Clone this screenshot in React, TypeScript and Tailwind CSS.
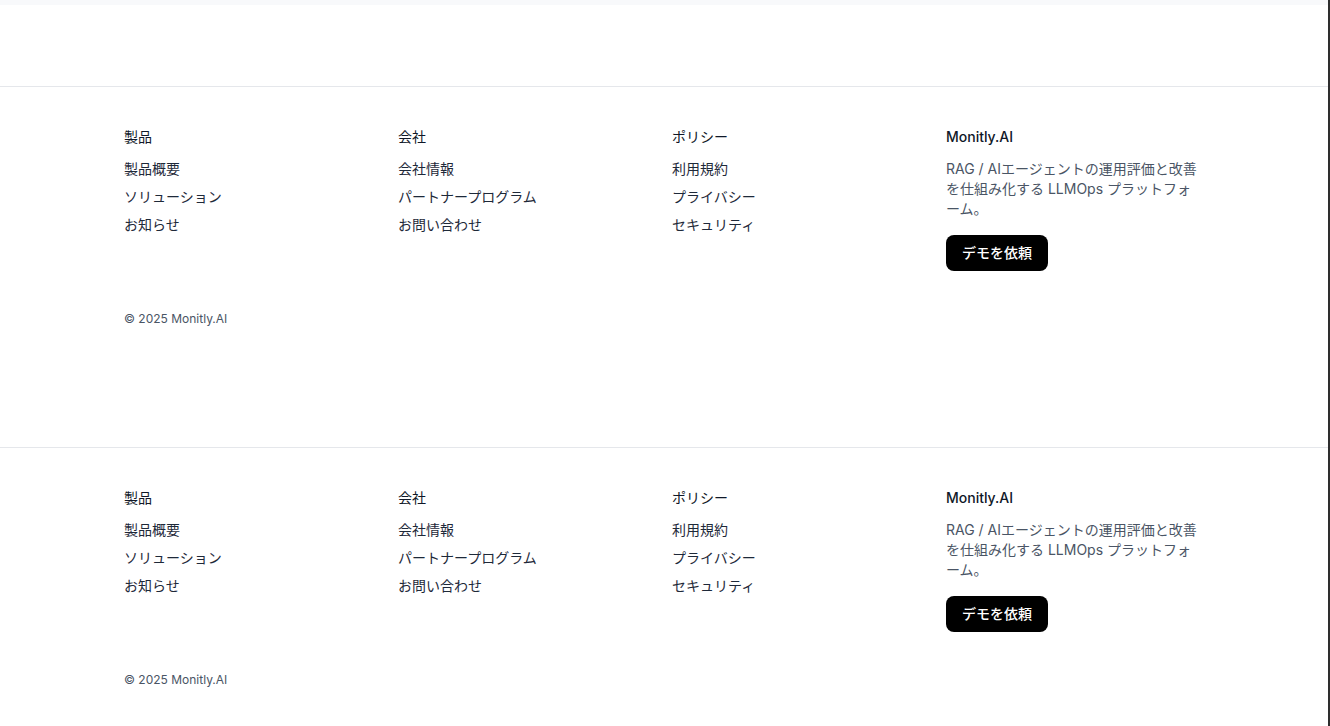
import React from "react";

const columns = [
  { title: "製品", links: ["製品概要", "ソリューション", "お知らせ"] },
  { title: "会社", links: ["会社情報", "パートナープログラム", "お問い合わせ"] },
  { title: "ポリシー", links: ["利用規約", "プライバシー", "セキュリティ"] },
];

const Footer: React.FC = () => {
  return (
    <footer className="border-t border-gray-200 bg-white">
      <div className="max-w-[1080px] mx-auto pt-10 pb-[120px]">
        <div className="grid grid-cols-4 gap-4">
          {columns.map((col) => (
            <div key={col.title}>
              <h3 className="text-sm leading-5 text-gray-900">{col.title}</h3>
              <ul className="mt-3 space-y-2">
                {col.links.map((l) => (
                  <li key={l} className="text-sm leading-5 text-gray-800">
                    {l}
                  </li>
                ))}
              </ul>
            </div>
          ))}
          <div>
            <h3 className="text-sm leading-5 font-medium text-gray-900">Monitly.AI</h3>
            <p className="mt-3 text-sm leading-5 text-gray-600 pr-1">
              RAG / AIエージェントの運用評価と改善を仕組み化する LLMOps プラットフォーム。
            </p>
            <button className="mt-4 h-9 px-4 rounded-lg bg-black text-white text-sm font-medium">
              デモを依頼
            </button>
          </div>
        </div>
        <p className="mt-10 text-xs leading-4 text-gray-600">© 2025 Monitly.AI</p>
      </div>
    </footer>
  );
};

export default function App() {
  return (
    <div
      className="flex h-[726px] overflow-hidden bg-white"
      style={{ fontFamily: 'Inter, "Noto Sans CJK JP", sans-serif' }}
    >
      <div className="flex-1 min-w-0">
        <div className="h-[5px] bg-[#f8f9fb]" />
        <div className="h-[81px]" />
        <Footer />
        <Footer />
      </div>
      <div className="w-[2px] bg-[#2e2e2e]" />
    </div>
  );
}
